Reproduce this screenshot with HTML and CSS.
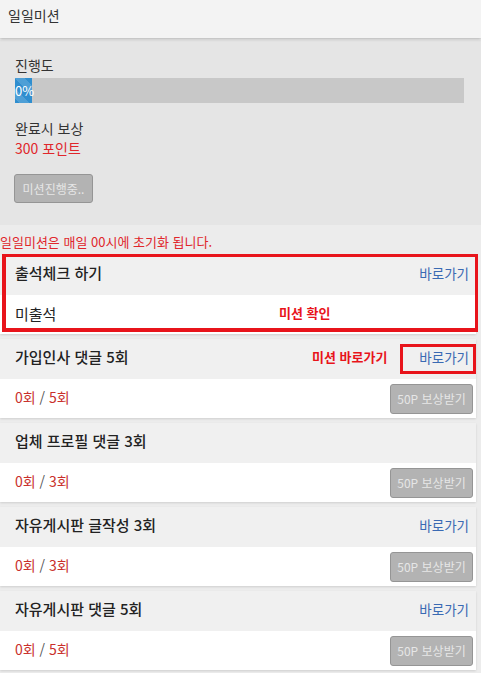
FILE: index.html
```html
<!DOCTYPE html>
<html lang="ko">
<head>
<meta charset="utf-8">
<title>일일미션</title>
<link rel="stylesheet" href="styles.css">
</head>
<body>
<div class="page">
  <header class="top">일일미션</header>
  <section class="panel">
    <div class="label">진행도</div>
    <div class="bar"><div class="fill" style="width:17px">0%</div></div>
    <div class="label reward-label">완료시 보상</div>
    <div class="points">300 포인트</div>
    <button class="progress-btn">미션진행중..</button>
  </section>
  <p class="notice">일일미션은 매일 00시에 초기화 됩니다.</p>

  <div class="cards">
    <div class="card">
      <div class="card-head"><span class="title">출석체크 하기</span><a class="go">바로가기</a></div>
      <div class="card-body"><span class="plain">미출석</span></div>
    </div>
    <div class="card">
      <div class="card-head"><span class="title">가입인사 댓글 5회</span><a class="go">바로가기</a></div>
      <div class="card-body"><span class="count">0회 <span class="slash">/</span> 5회</span><button class="reward-btn">50P 보상받기</button></div>
    </div>
    <div class="card">
      <div class="card-head"><span class="title">업체 프로필 댓글 3회</span></div>
      <div class="card-body"><span class="count">0회 <span class="slash">/</span> 3회</span><button class="reward-btn">50P 보상받기</button></div>
    </div>
    <div class="card">
      <div class="card-head"><span class="title">자유게시판 글작성 3회</span><a class="go">바로가기</a></div>
      <div class="card-body"><span class="count">0회 <span class="slash">/</span> 3회</span><button class="reward-btn">50P 보상받기</button></div>
    </div>
    <div class="card">
      <div class="card-head"><span class="title">자유게시판 댓글 5회</span><a class="go">바로가기</a></div>
      <div class="card-body"><span class="count">0회 <span class="slash">/</span> 5회</span><button class="reward-btn">50P 보상받기</button></div>
    </div>
  </div>

  <div class="mark mark-box1"></div>
  <div class="mark mark-box2"></div>
  <div class="mark-text mark-text1">미션 확인</div>
  <div class="mark-text mark-text2">미션 바로가기</div>
</div>
</body>
</html>
```

FILE: styles.css
```css
* { box-sizing: border-box; }
html, body { margin: 0; padding: 0; }
body {
  background: #ececec;
  font-family: "Noto Sans CJK KR", "Noto Sans", sans-serif;
  color: #333;
  width: 481px;
  height: 673px;
  overflow: hidden;
}
.page { position: relative; }

.top {
  height: 38px;
  background: #f3f3f3;
  font-size: 14px;
  line-height: 30px;
  padding-left: 8px;
  color: #333;
  box-shadow: 0 1px 3px rgba(0,0,0,0.25);
  position: relative;
  z-index: 1;
}

.panel {
  background: #e5e5e5;
  padding: 15px 17px 22px 15px;
  margin-top: 2px;
}
.label { font-size: 14px; line-height: 20px; color: #333; }
.bar {
  margin-top: 3px;
  height: 25px;
  background: #c8c8c8;
}
.fill {
  height: 25px;
  background-color: #2f8ecf;
  background-image: linear-gradient(45deg, rgba(255,255,255,0.15) 25%, transparent 25%, transparent 50%, rgba(255,255,255,0.15) 50%, rgba(255,255,255,0.15) 75%, transparent 75%, transparent);
  background-size: 20px 20px;
  color: #fff;
  font-size: 13px;
  line-height: 25px;
  overflow: visible;
  white-space: nowrap;
}
.reward-label { margin-top: 15px; }
.points { font-size: 14px; line-height: 20px; color: #e0262b; }
.progress-btn {
  display: block;
  margin-top: 16px;
  margin-left: -1px;
  width: 79px;
  height: 29px;
  padding: 0;
  background: #b3b3b3;
  border: 1px solid #959595;
  border-radius: 3px;
  color: #e6e6e6;
  font-family: inherit;
  font-size: 12px;
}

.notice {
  margin: 0;
  font-size: 13px;
  line-height: 20px;
  height: 30px;
  padding-top: 7px;
  color: #e0262b;
}

.cards {
  display: flex;
  flex-direction: column;
  gap: 5px;
  width: 476px;
}
.card { box-shadow: 0 1px 2px rgba(0,0,0,0.12); }
.card-head {
  height: 40px;
  background: #f0f0f0;
  display: flex;
  align-items: center;
  justify-content: space-between;
  padding: 0 7px 5px 15px;
}
.title { font-size: 15px; font-weight: 500; color: #222; }
.go { font-size: 13.5px; color: #3a6ab3; }
.card-body {
  height: 39px;
  background: #fff;
  display: flex;
  align-items: center;
  justify-content: space-between;
  padding: 0 3px 0 15px;
}
.card-body .count, .card-body .plain { padding-bottom: 3px; }
.plain { font-size: 15px; color: #222; }
.count { font-size: 14px; color: #c9302c; }
.slash { color: #555; }
.reward-btn {
  width: 83px;
  height: 30px;
  padding: 0;
  background: #b3b3b3;
  border: 1px solid #959595;
  border-radius: 3px;
  color: #e6e6e6;
  font-family: inherit;
  font-size: 12px;
}

.mark {
  position: absolute;
  border: 3px solid #e8141b;
}
.mark-box1 { left: 2px; top: 254px; width: 476px; height: 78px; border-width: 3px 3px 4px 4px; }
.mark-box2 { left: 400px; top: 344px; width: 76px; height: 30px; }
.mark-text {
  position: absolute;
  color: #e8141b;
  font-size: 13px;
  font-weight: 700;
  line-height: 18px;
}
.mark-text1 { left: 279px; top: 304px; }
.mark-text2 { left: 312px; top: 348px; }
```
